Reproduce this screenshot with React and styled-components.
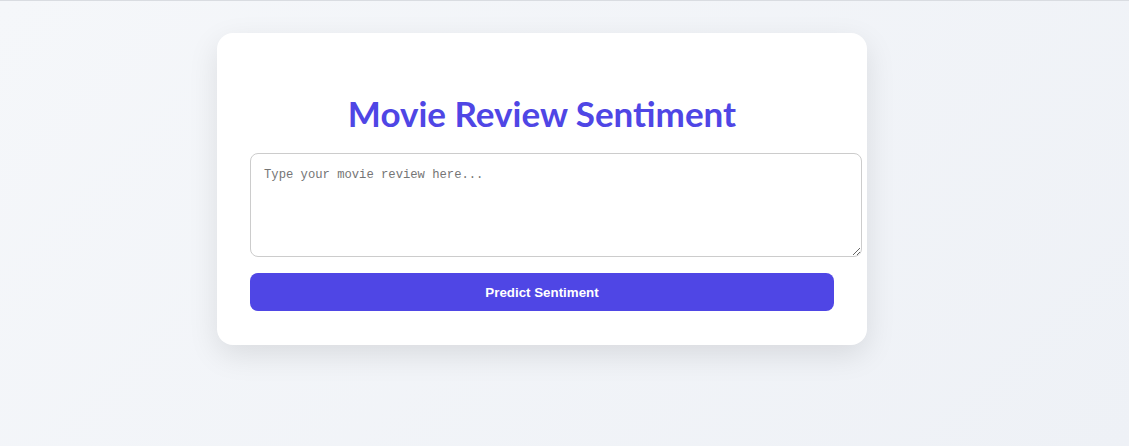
import React from "react"
import styled, { createGlobalStyle } from 'styled-components'

const GlobalStyle = createGlobalStyle`
  html, body {
    margin: 0;
    padding: 0;
  }
  body {
    min-height: 446px;
    background: linear-gradient(135deg, #f5f7fa 0%, #eef1f6 100%);
    border-top: 1px solid #d9dce1;
    font-family: "Noto Sans", "Liberation Sans", sans-serif;
  }
`

export default () => {
  return (
    <>
      <GlobalStyle />
      <Page>
        <Card>
          <Title>Movie Review Sentiment</Title>
          <Review placeholder="Type your movie review here..." />
          <Button>Predict Sentiment</Button>
        </Card>
      </Page>
    </>
  )
}

const Page = styled.div`
  padding: 32px 0 0 217px;
`

const Card = styled.div`
  width: 584px;
  padding: 32px 33px 34px;
  background: #fff;
  border-radius: 16px;
  box-shadow: 0 10px 30px rgba(0, 0, 0, 0.1);
`

const Title = styled.h1`
  margin: 26px 0 18px;
  text-align: center;
  color: #4f46e5;
  font-family: Lato, "Noto Sans", sans-serif;
  font-size: 35px;
  font-weight: 700;
  line-height: 44px;
`

const Review = styled.textarea`
  display: block;
  width: 584px;
  height: 76px;
  padding: 14px 13px 12px;
  margin: 0 0 16px;
  border: 1px solid #ccc;
  border-radius: 8px;
  font-family: "Liberation Mono", monospace;
  font-size: 12.2px;
  color: #333;
  outline: none;
  &::placeholder {
    color: #757575;
  }
`

const Button = styled.button`
  display: block;
  width: 584px;
  height: 38px;
  border: none;
  border-radius: 8px;
  background: #4f46e5;
  color: #fff;
  font-family: "Liberation Sans", Arial, sans-serif;
  font-size: 13.33px;
  font-weight: 700;
  cursor: pointer;
`
